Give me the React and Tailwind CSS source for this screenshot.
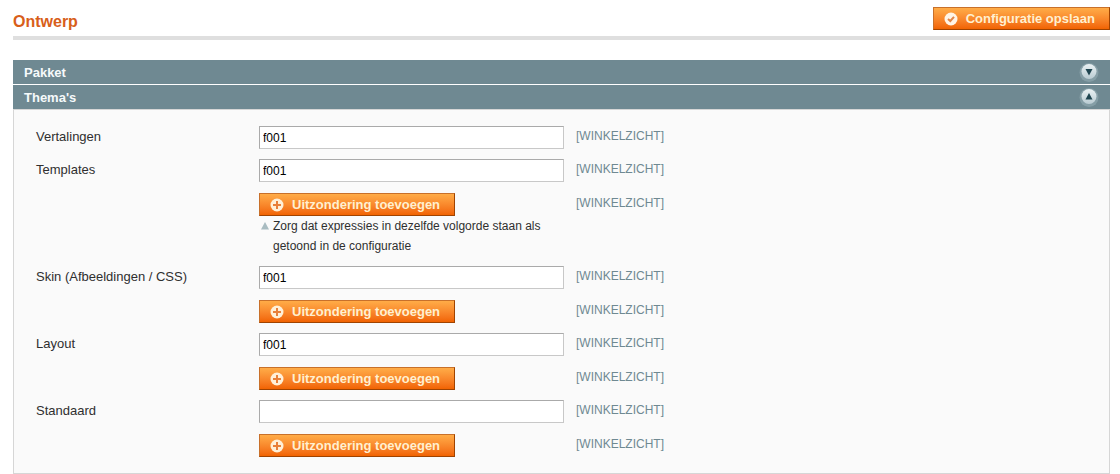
import { useState } from "react";

const groups = [
  { id: "locale", label: "Vertalingen", value: "f001" },
  {
    id: "template",
    label: "Templates",
    value: "f001",
    exceptions: true,
    note: "Zorg dat expressies in dezelfde volgorde staan als getoond in de configuratie",
  },
  { id: "skin", label: "Skin (Afbeeldingen / CSS)", value: "f001", exceptions: true },
  { id: "layout", label: "Layout", value: "f001", exceptions: true },
  { id: "default", label: "Standaard", value: "", exceptions: true },
];

function CheckIcon() {
  return (
    <svg className="size-3.5 shrink-0" viewBox="0 0 14 14" aria-hidden="true">
      <circle cx="7" cy="7" r="6.5" fill="#fff4e6" />
      <path d="M4 7 6.3 9 10 4.8" fill="none" stroke="#e0854a" strokeWidth="2" />
    </svg>
  );
}

function PlusIcon() {
  return (
    <svg className="size-3.5 shrink-0" viewBox="0 0 14 14" aria-hidden="true">
      <circle cx="7" cy="7" r="6.5" fill="#fff0d8" />
      <path d="M7 3v8M3 7h8" fill="none" stroke="#e8803a" strokeWidth="2" />
    </svg>
  );
}

function ToggleIcon({ open }) {
  return (
    <svg className="size-5 shrink-0" viewBox="0 0 20 20" aria-hidden="true">
      <defs>
        <linearGradient id={open ? "discOpen" : "discClosed"} x1="0" y1="0" x2="0" y2="1">
          <stop offset="0" stopColor="#eaf1f3" />
          <stop offset="1" stopColor="#b9cbd2" />
        </linearGradient>
      </defs>
      <circle cx="10" cy="10.5" r="9.5" fill="#859ea6" />
      <circle cx="10" cy="9.5" r="7.5" fill={open ? "url(#discOpen)" : "url(#discClosed)"} />
      <path d={open ? "M6.5 12.5h7L10 6z" : "M6.5 7h7L10 13.5z"} fill="#1f4550" />
    </svg>
  );
}

function ActionButton({ icon, children }) {
  return (
    <button
      type="button"
      className="flex h-[23px] cursor-pointer items-center gap-2 whitespace-nowrap border border-t-[#c8702a] border-r-[#a04300] border-b-[#a04300] border-l-[#c8702a] bg-linear-to-b from-[#ffac47] to-[#f16300] pr-3.5 pl-2.5 text-[13px] font-bold text-[#fff0d0]"
    >
      {icon}
      {children}
    </button>
  );
}

function SectionBar({ title, open, onToggle }) {
  return (
    <button
      type="button"
      aria-expanded={open}
      onClick={onToggle}
      className="flex h-6 w-full cursor-pointer items-center justify-between bg-[#6f8992] pr-[11px] pl-[11px] text-[13px] font-bold text-[#f6fafb]"
    >
      <span className="pt-0.5">{title}</span>
      <ToggleIcon open={open} />
    </button>
  );
}

function Scope() {
  return <span className="text-xs leading-5 text-[#6f8992]">[WINKELZICHT]</span>;
}

function Group({ group }) {
  return (
    <div className="grid grid-cols-[223px_305px_1fr] gap-y-[11px]">
      <label htmlFor={group.id} className="pt-px text-[13px] leading-5">
        {group.label}
      </label>
      <input
        id={group.id}
        type="text"
        defaultValue={group.value}
        className="h-[23px] w-full border border-t-[#aaaaaa] border-r-[#c8c8c8] border-b-[#c8c8c8] border-l-[#aaaaaa] bg-white px-[3px] text-xs text-black"
      />
      <div className="flex pl-3">
        <Scope />
      </div>
      {group.exceptions && (
        <>
          <div className="col-start-2">
            <ActionButton icon={<PlusIcon />}>Uitzondering toevoegen</ActionButton>
            {group.note && (
              <p className="flex gap-1 pl-0.5 text-xs leading-5">
                <svg className="mt-1.5 size-2 shrink-0" viewBox="0 0 8 8" aria-hidden="true">
                  <path d="M0 7.5h8L4 0z" fill="#a9bcc1" />
                </svg>
                {group.note}
              </p>
            )}
          </div>
          <div className="flex pl-3">
            <Scope />
          </div>
        </>
      )}
    </div>
  );
}

export default function App() {
  const [packageOpen, setPackageOpen] = useState(false);
  const [themesOpen, setThemesOpen] = useState(true);

  return (
    <main className="bg-white pt-[7px] pr-2.5 pl-[13px] font-['Liberation_Sans',Arial,sans-serif] text-[#2f2f2f]">
      <header className="flex items-end justify-between border-b-4 border-[#dfdfdf] pb-1.5">
        <h1 className="text-base leading-4 font-bold text-[#d85e1a]">Ontwerp</h1>
        <ActionButton icon={<CheckIcon />}>Configuratie opslaan</ActionButton>
      </header>

      <form className="mt-5">
        <section>
          <SectionBar title="Pakket" open={packageOpen} onToggle={() => setPackageOpen(!packageOpen)} />
        </section>
        <section className="mt-px">
          <SectionBar title="Thema's" open={themesOpen} onToggle={() => setThemesOpen(!themesOpen)} />
          {themesOpen && (
            <div className="flex flex-col gap-2.5 border border-[#d6d6d6] bg-[#fafafa] py-4 pl-[22px]">
              {groups.map((group) => (
                <Group key={group.id} group={group} />
              ))}
            </div>
          )}
        </section>
      </form>
    </main>
  );
}
